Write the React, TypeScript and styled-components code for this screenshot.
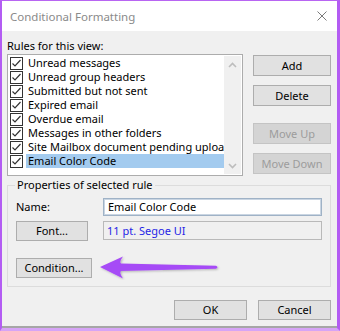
import React from "react";
import styled, { createGlobalStyle } from "styled-components";

const Global = createGlobalStyle`
  html, body { margin: 0; padding: 0; background: #ffffff; }
  * { box-sizing: border-box; }
`;

const FONT = `"Noto Sans", "Open Sans", Arial, sans-serif`;

const Window = styled.div`
  width: 340px;
  height: 331px;
  display: flex;
  flex-direction: column;
  border-top: 1px solid #b865f2;
  border-left: 2px solid #b35cf3;
  border-right: 3px solid #b35cf3;
  border-bottom: 3px solid #d6a4f6;
  font-family: ${FONT};
  font-size: 11px;
  color: #000;
  overflow: hidden;
`;

const TitleBar = styled.div`
  height: 30px;
  flex: none;
  background: #ffffff;
  display: flex;
  align-items: center;
  justify-content: space-between;
  padding: 0 10px 0 8px;
`;

const Title = styled.span`
  font-size: 11.5px;
  color: #8a8a8a;
`;

const CloseIcon = styled.svg`
  width: 10px;
  height: 10px;
  display: block;
`;

const Body = styled.div`
  flex: 1;
  background: #f0f0f0;
  border-bottom: 2px solid #a6a6a6;
  padding: 7px 6px 0 5px;
  display: flex;
  flex-direction: column;
`;

const TopGrid = styled.div`
  display: grid;
  grid-template-columns: 236px 78px;
  column-gap: 10px;
`;

const SectionLabel = styled.div`
  grid-column: 1 / 2;
  height: 16px;
  line-height: 16px;
`;

const ListBox = styled.div`
  grid-column: 1 / 2;
  height: 122px;
  border: 1px solid #acacac;
  background: #ffffff;
  padding: 1px;
  display: flex;
`;

const Items = styled.div`
  flex: 1;
  min-width: 0;
  overflow: hidden;
`;

const Row = styled.div`
  height: 14px;
  display: flex;
  align-items: center;
  white-space: nowrap;
`;

const Check = styled.svg`
  width: 13px;
  height: 13px;
  flex: none;
  margin-left: 1px;
  margin-right: 3px;
  display: block;
`;

const ItemText = styled.span<{ $selected?: boolean }>`
  flex: 1;
  min-width: 0;
  height: 14px;
  line-height: 14px;
  padding-left: 2px;
  overflow: hidden;
  background: ${(p) => (p.$selected ? "#a3cbef" : "transparent")};
`;

const ScrollBar = styled.div`
  width: 17px;
  flex: none;
  background: #f0f0f0;
  display: flex;
  flex-direction: column;
  justify-content: space-between;
  align-items: center;
  padding: 6px 0 5px;
`;

const Chevron = styled.svg`
  width: 9px;
  height: 6px;
  display: block;
`;

const ButtonColumn = styled.div`
  grid-column: 2 / 3;
  display: flex;
  flex-direction: column;
  padding-top: 1px;
`;

const Button = styled.button<{ $w?: number; $h?: number; $gap?: number }>`
  width: ${(p) => (p.$w ? `${p.$w}px` : "100%")};
  height: ${(p) => p.$h ?? 21}px;
  margin-top: ${(p) => p.$gap ?? 0}px;
  padding: 0;
  border: 1px solid #adadad;
  background: #e1e1e1;
  font-family: ${FONT};
  font-size: 11px;
  line-height: 14px;
  color: #000;
  flex: none;
  &:disabled {
    background: #d4d4d4;
    border-color: #c4c4c4;
    color: #9c9c9c;
  }
`;

const Group = styled.fieldset`
  margin: 2px 0 0 0;
  padding: 6px 7px 6px 8px;
  border: 1px solid #dcdcdc;
  min-width: 0;
`;

const Legend = styled.legend`
  padding: 0 2px;
  margin-left: -1px;
  line-height: 14px;
`;

const PropGrid = styled.div`
  display: grid;
  grid-template-columns: 87px 219px;
  grid-template-rows: 18px 20px;
  row-gap: 5px;
  align-items: center;
`;

const FieldLabel = styled.span`
  line-height: 14px;
`;

const TextInput = styled.div`
  height: 18px;
  border: 1px solid #9fb2c6;
  box-shadow: inset 0 0 0 1px #c9d5e2;
  background: #ffffff;
  padding-left: 4px;
  line-height: 16px;
`;

const FontDisplay = styled.div`
  height: 19px;
  align-self: start;
  border: 1px solid #b9b9b9;
  background: #f0f0f0;
  padding-left: 3px;
  line-height: 17px;
  color: #1f1fe6;
`;

const ConditionRow = styled.div`
  display: flex;
  align-items: center;
  margin-top: 14px;
  gap: 7px;
`;

const Arrow = styled.svg`
  width: 122px;
  height: 24px;
  display: block;
  margin-top: 1px;
`;

const Footer = styled.div`
  display: flex;
  justify-content: flex-end;
  gap: 11px;
  margin-top: 13px;
`;

const rules = [
  "Unread messages",
  "Unread group headers",
  "Submitted but not sent",
  "Expired email",
  "Overdue email",
  "Messages in other folders",
  "Site Mailbox document pending upload",
  "Email Color Code",
];

const CheckBox = () => (
  <Check viewBox="0 0 13 13">
    <rect x="0.5" y="0.5" width="12" height="12" fill="#fff" stroke="#333" />
    <polyline points="2.5,6.5 5,9 10.5,3" fill="none" stroke="#333" strokeWidth="1.2" />
  </Check>
);

export default function App() {
  return (
    <>
      <Global />
      <Window>
        <TitleBar>
          <Title>Conditional Formatting</Title>
          <CloseIcon viewBox="0 0 10 10">
            <path d="M0.5 0.5 L9.5 9.5 M9.5 0.5 L0.5 9.5" stroke="#7a7a7a" strokeWidth="1" />
          </CloseIcon>
        </TitleBar>
        <Body>
          <TopGrid>
            <SectionLabel>Rules for this view:</SectionLabel>
            <div />
            <ListBox>
              <Items>
                {rules.map((r, i) => (
                  <Row key={r}>
                    <CheckBox />
                    <ItemText $selected={i === rules.length - 1}>{r}</ItemText>
                  </Row>
                ))}
              </Items>
              <ScrollBar>
                <Chevron viewBox="0 0 9 6">
                  <polyline points="1,5 4.5,1.5 8,5" fill="none" stroke="#bdbdbd" strokeWidth="1.6" />
                </Chevron>
                <Chevron viewBox="0 0 9 6">
                  <polyline points="1,1 4.5,4.5 8,1" fill="none" stroke="#bdbdbd" strokeWidth="1.6" />
                </Chevron>
              </ScrollBar>
            </ListBox>
            <ButtonColumn>
              <Button>Add</Button>
              <Button $gap={9}>Delete</Button>
              <Button $gap={17} disabled>Move Up</Button>
              <Button $gap={9} disabled>Move Down</Button>
            </ButtonColumn>
          </TopGrid>
          <Group>
            <Legend>Properties of selected rule</Legend>
            <PropGrid>
              <FieldLabel>Name:</FieldLabel>
              <TextInput>Email Color Code</TextInput>
              <Button $w={72} $h={20}>Font...</Button>
              <FontDisplay>11 pt. Segoe UI</FontDisplay>
            </PropGrid>
            <ConditionRow>
              <Button $w={76} $h={20}>Condition...</Button>
              <Arrow viewBox="0 0 122 24">
                <defs>
                  <filter id="sh" x="-10%" y="-30%" width="120%" height="160%">
                    <feDropShadow dx="1" dy="1" stdDeviation="0.8" floodColor="#000" floodOpacity="0.25" />
                  </filter>
                </defs>
                <path
                  d="M1 11 L24 0.5 Q20 6 22 7.5 L117 9.8 Q120 11.2 117 12.8 L22 15 Q20 16.5 24 22.5 Z"
                  fill="#a64cf6"
                  filter="url(#sh)"
                />
              </Arrow>
            </ConditionRow>
          </Group>
          <Footer>
            <Button $w={73} $h={20}>OK</Button>
            <Button $w={73} $h={20}>Cancel</Button>
          </Footer>
        </Body>
      </Window>
    </>
  );
}
